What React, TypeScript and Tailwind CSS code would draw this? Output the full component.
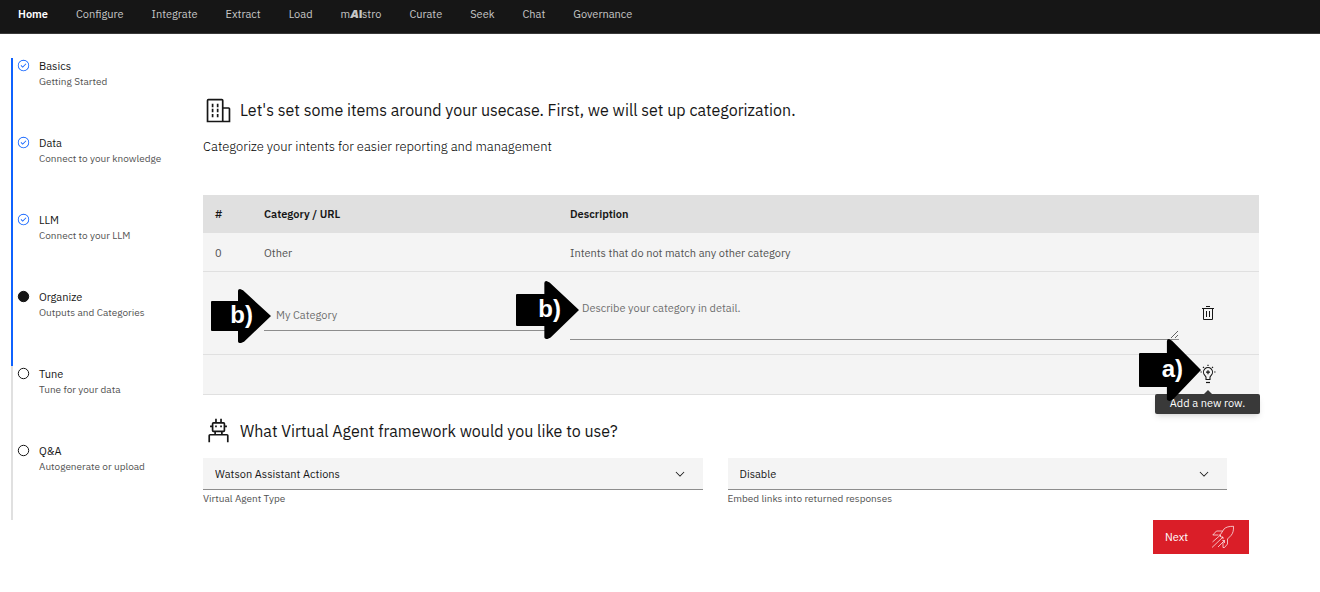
import { useState, type ReactNode } from "react";

type IconProps = { className?: string; children: ReactNode };

function Icon({ className, children }: IconProps) {
  return (
    <svg viewBox="0 0 32 32" fill="currentColor" aria-hidden="true" className={className}>
      {children}
    </svg>
  );
}

function EnterpriseIcon() {
  return (
    <Icon className="size-[27px] shrink-0">
      <path d="M8 8h2v4H8zM8 14h2v4H8zM14 8h2v4h-2zM14 14h2v4h-2zM8 20h2v4H8zM14 20h2v4h-2z" />
      <path d="M30 14a2 2 0 0 0-2-2h-6V4a2 2 0 0 0-2-2H4a2 2 0 0 0-2 2v26h28zM4 4h16v24H4zm18 24V14h6v14z" />
    </Icon>
  );
}

function BotIcon() {
  return (
    <Icon className="size-[27px] shrink-0">
      <path d="M18 10h2v2h-2zM12 10h2v2h-2z" />
      <path d="M26 20h-5v-2h1a2 2 0 0 0 2-2v-4h2v-2h-2V8a2 2 0 0 0-2-2h-2V2h-2v4h-4V2h-2v4h-2a2 2 0 0 0-2 2v2H6v2h2v4a2 2 0 0 0 2 2h1v2H6a2 2 0 0 0-2 2v8h2v-8h20v8h2v-8a2 2 0 0 0-2-2zM10 8h12v8H10zm3 10h6v2h-6z" />
    </Icon>
  );
}

function TrashIcon() {
  return (
    <Icon className="size-4">
      <path d="M12 12h2v12h-2zM18 12h2v12h-2zM4 6v2h2v20a2 2 0 0 0 2 2h16a2 2 0 0 0 2-2V8h2V6zm4 22V8h16v20zM12 2h8v2h-8z" />
    </Icon>
  );
}

function IdeaIcon() {
  return (
    <svg viewBox="0 0 16 20" fill="none" stroke="currentColor" aria-hidden="true" className="h-5 w-4">
      <path d="M6 15.500v-2.300c0-.7-.5-1.200-1.200-1.900a4.500 4.500 0 1 1 6.400 0c-.7.7-1.200 1.200-1.200 1.900v2.300z" strokeWidth="1.100" />
      <path d="M8 6.200v4M6 8.200h4" strokeWidth="1.200" />
      <path d="M6 18.500h4" strokeWidth="1.200" />
      <path d="M8 .8v1.200M3 2.800l1 1M13 2.800l-1 1M.5 8h1.300M14.200 8h1.300" strokeWidth="1.200" />
    </svg>
  );
}

function ChevronIcon() {
  return (
    <Icon className="pointer-events-none col-start-1 row-start-1 mr-4 size-3.5 self-center justify-self-end">
      <path d="M16 22L6 12l1.400-1.400 8.600 8.600 8.600-8.600L26 12z" />
    </Icon>
  );
}

function RocketIcon() {
  return (
    <svg viewBox="0 0 24 24" fill="none" stroke="currentColor" strokeWidth="0.700" aria-hidden="true" className="size-6">
      <path d="M9.500 9.500l3.500-5.500C15 2 18 1.300 22.500 1.300c.2 4-.5 7-2.500 9.200l-3.500 3.500v5L13.500 22.500H12V17" />
      <path d="M11.500 6H5.500L1.800 10H7" />
      <path d="M1.500 17l8-7M1 22.500L12 12M7 22l6.500-6.500M7.500 10h2v2M10 12h2v2.200M11.300 15.500h2.200V18" />
    </svg>
  );
}

type StepState = "done" | "current" | "todo";

function StepMarker({ state }: { state: StepState }) {
  if (state === "done") {
    return (
      <Icon className="mt-px size-[13px] text-[#0f62fe]">
        <path d="M14 21.414l-5-5.001L10.413 15 14 18.586 21.585 11 23 12.415z" />
        <path d="M16 2a14 14 0 1 0 14 14A14 14 0 0 0 16 2zm0 26a12 12 0 1 1 12-12 12 12 0 0 1-12 12z" />
      </Icon>
    );
  }
  return (
    <svg viewBox="0 0 13 13" aria-hidden="true" className="mt-px size-[13px] text-[#161616]">
      <circle cx="6.500" cy="6.500" r="5.200" stroke="currentColor" fill={state === "current" ? "currentColor" : "none"} />
    </svg>
  );
}

const steps: { title: string; detail: string; state: StepState }[] = [
  { title: "Basics", detail: "Getting Started", state: "done" },
  { title: "Data", detail: "Connect to your knowledge", state: "done" },
  { title: "LLM", detail: "Connect to your LLM", state: "done" },
  { title: "Organize", detail: "Outputs and Categories", state: "current" },
  { title: "Tune", detail: "Tune for your data", state: "todo" },
  { title: "Q&A", detail: "Autogenerate or upload", state: "todo" },
];

const navItems: { id: string; label: ReactNode }[] = [
  { id: "home", label: "Home" },
  { id: "configure", label: "Configure" },
  { id: "integrate", label: "Integrate" },
  { id: "extract", label: "Extract" },
  { id: "load", label: "Load" },
  {
    id: "maistro",
    label: (
      <>
        m<span className="font-['Inter',sans-serif] font-black italic">A</span>
        <span className="font-['Inter',sans-serif] font-black">I</span>stro
      </>
    ),
  },
  { id: "curate", label: "Curate" },
  { id: "seek", label: "Seek" },
  { id: "chat", label: "Chat" },
  { id: "governance", label: "Governance" },
];

function Callout({ label, className }: { label: string; className: string }) {
  return (
    <div className={`pointer-events-none absolute z-20 flex items-center justify-end ${className}`}>
      <svg viewBox="0 0 60 60" preserveAspectRatio="none" aria-hidden="true" className="absolute inset-0 size-full">
        <path
          d="M1 14h26V3q0-2 2-2l3 1.500L60 30 33 57.500 30 59q-3 0-3-2V46H1q-1 0-1-1V15q0-1 1-1z"
          fill="#000"
        />
      </svg>
      <span className="relative pr-[18px] pb-0.5 font-['Liberation_Sans',sans-serif] text-2xl leading-6 font-bold text-white">
        {label}
      </span>
    </div>
  );
}

function SelectField({ id, label, options }: { id: string; label: string; options: string[] }) {
  return (
    <div className="flex flex-col">
      <div className="grid">
        <select
          id={id}
          className="col-start-1 row-start-1 h-8 w-full appearance-none rounded-none border-b border-[#8d8d8d] bg-[#f4f4f4] px-3 pt-0.5 text-[11px] text-[#161616]"
        >
          {options.map((option) => (
            <option key={option}>{option}</option>
          ))}
        </select>
        <ChevronIcon />
      </div>
      <label htmlFor={id} className="pt-px text-[10px] leading-4 text-[#525252]">
        {label}
      </label>
    </div>
  );
}

export default function App() {
  const [category, setCategory] = useState("");
  const [description, setDescription] = useState("");

  return (
    <div className="bg-white font-['IBM_Plex_Sans','Inter',sans-serif] text-[11px] text-[#161616]">
      <header className="border-b border-[#393939] bg-[#161616]">
        <nav className="flex h-[33px] items-center gap-7 px-[18px] pb-1">
          {navItems.map((item) => (
            <a
              key={item.id}
              href={`#${item.id}`}
              className={item.id === "home" ? "font-semibold text-white" : "text-[#c6c6c6]"}
            >
              {item.label}
            </a>
          ))}
        </nav>
      </header>

      <div className="flex items-start pt-6">
        <ol className="ml-[11px] w-48 shrink-0">
          {steps.map((step) => (
            <li
              key={step.title}
              className={`flex h-[77px] items-start gap-[9px] border-l-2 pl-1 ${
                step.state === "todo" ? "border-[#e0e0e0]" : "border-[#0f62fe]"
              }`}
            >
              <StepMarker state={step.state} />
              <div className="flex flex-col">
                <span className="text-[11px] leading-4">{step.title}</span>
                <span className="text-[10px] leading-4 text-[#525252]">{step.detail}</span>
              </div>
            </li>
          ))}
        </ol>

        <main className="min-w-0 flex-1 pt-9 pr-[61px]">
          <h1 className="flex h-8 items-center gap-2 pl-0.5 text-base">
            <EnterpriseIcon />
            Let's set some items around your usecase. First, we will set up categorization.
          </h1>
          <p className="pt-[11px] text-[13px] leading-5 font-light text-black">
            Categorize your intents for easier reporting and management
          </p>

          <table className="mt-[38px] w-full table-fixed border-collapse bg-[#f4f4f4] text-left">
            <colgroup>
              <col className="w-[49px]" />
              <col className="w-[306px]" />
              <col />
              <col className="w-16" />
            </colgroup>
            <thead>
              <tr className="h-[38px] bg-[#e0e0e0]">
                <th className="px-3 font-semibold">#</th>
                <th className="px-3 font-semibold">Category / URL</th>
                <th className="px-3 font-semibold">Description</th>
                <th aria-label="Actions" />
              </tr>
            </thead>
            <tbody className="text-[#525252]">
              <tr className="h-[38px] border-b border-[#e0e0e0]">
                <td className="px-3 pt-0.5">0</td>
                <td className="px-3 pt-0.5">Other</td>
                <td className="px-3 pt-0.5">Intents that do not match any other category</td>
                <td />
              </tr>
              <tr className="h-[83px] border-b border-[#e0e0e0]">
                <td />
                <td className="relative px-3 pt-1">
                  <input
                    aria-label="Category"
                    value={category}
                    onChange={(event) => setCategory(event.target.value)}
                    placeholder="My Category"
                    className="block h-8 w-full rounded-none border-b border-[#8d8d8d] px-3 pt-0.5 placeholder:text-[#6f6f6f]"
                  />
                  <Callout label="b)" className="top-4 -left-[41px] h-14 w-15" />
                </td>
                <td className="relative pr-4 pl-3">
                  <textarea
                    aria-label="Description"
                    value={description}
                    onChange={(event) => setDescription(event.target.value)}
                    placeholder="Describe your category in detail."
                    className="block h-[54px] w-full resize rounded-none border-b border-[#8d8d8d] px-3 py-3.5 leading-4 placeholder:text-[#6f6f6f]"
                  />
                  <Callout label="b)" className="top-2 -left-[42px] h-15 w-[63px]" />
                </td>
                <td>
                  <button type="button" aria-label="Delete row" className="ml-[5px] block text-[#161616]">
                    <TrashIcon />
                  </button>
                </td>
              </tr>
              <tr className="h-10 border-b border-[#e0e0e0]">
                <td />
                <td />
                <td />
                <td className="relative">
                  <button
                    type="button"
                    aria-label="Add a new row."
                    className="ml-[5px] block text-[#161616]"
                  >
                    <IdeaIcon />
                  </button>
                  <div
                    role="tooltip"
                    className="absolute top-[39px] -right-px z-10 flex h-5 w-[105px] items-center justify-center rounded-xs bg-[#393939] text-[11px] whitespace-nowrap text-white shadow-md"
                  >
                    <span className="absolute -top-1 left-1/2 size-0 -translate-x-1/2 border-x-4 border-b-4 border-x-transparent border-b-[#393939]" />
                    Add a new row.
                  </div>
                  <Callout label="a)" className="-top-[17px] -left-14 h-16 w-[62px]" />
                </td>
              </tr>
            </tbody>
          </table>

          <h2 className="mt-5 flex h-8 items-center gap-2 pl-0.5 text-base">
            <BotIcon />
            What Virtual Agent framework would you like to use?
          </h2>
          <div className="mt-[11px] mr-8 grid grid-cols-2 gap-[25px]">
            <SelectField id="agent-type" label="Virtual Agent Type" options={["Watson Assistant Actions", "Watson Assistant Dialog"]} />
            <SelectField id="embed-links" label="Embed links into returned responses" options={["Disable", "Enable"]} />
          </div>

          <div className="mt-[13px] mr-2.5 flex justify-end">
            <button type="button" className="flex h-[34px] w-24 items-center justify-between bg-[#da1e28] pt-px pr-3.5 pl-3 text-white">
              Next
              <RocketIcon />
            </button>
          </div>
        </main>
      </div>
    </div>
  );
}
